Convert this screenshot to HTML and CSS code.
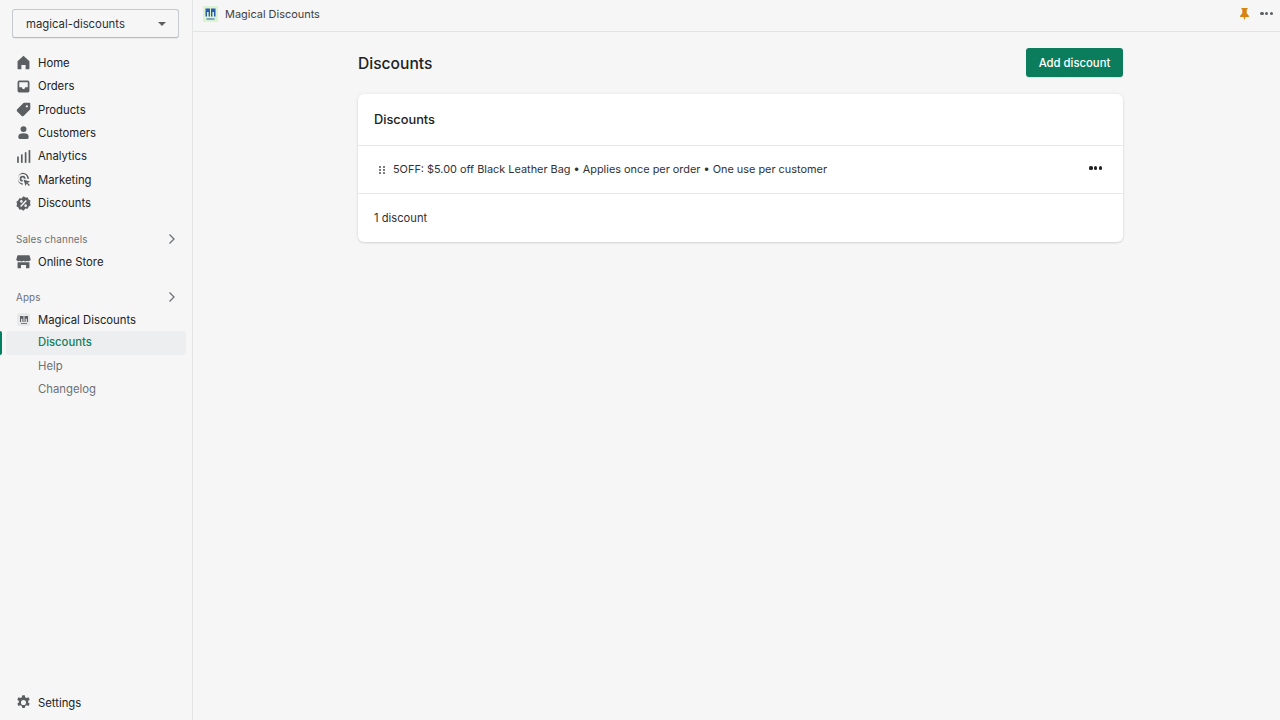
FILE: index.html
```html
<!DOCTYPE html>
<html lang="en">
<head>
<meta charset="utf-8">
<title>Magical Discounts</title>
<link rel="stylesheet" href="styles.css">
</head>
<body>
<div class="app">
  <aside class="sidebar">
    <div class="store-select"><span>magical-discounts</span><i class="caret"></i></div>
    <nav class="nav nav-main">
      <a class="item"><svg class="ic" viewBox="0 0 20 20"><path d="M10 2 3 8.500V17a1 1 0 0 0 1 1h3.500v-5h5v5H16a1 1 0 0 0 1-1V8.500z"/></svg>Home</a>
      <a class="item"><svg class="ic" viewBox="0 0 20 20"><path fill-rule="evenodd" d="M5 3h10a2 2 0 0 1 2 2v10a2 2 0 0 1-2 2H5a2 2 0 0 1-2-2V5a2 2 0 0 1 2-2zm0 2v6h3l1 2h2l1-2h3V5z"/></svg>Orders</a>
      <a class="item"><svg class="ic" viewBox="0 0 20 20"><path fill-rule="evenodd" d="M11 2h6a1 1 0 0 1 1 1v6a2 2 0 0 1-.6 1.400l-7 7a2 2 0 0 1-2.800 0l-5-5a2 2 0 0 1 0-2.800l7-7A2 2 0 0 1 11 2zm3 3a1.300 1.300 0 1 0 0 2.600a1.300 1.300 0 0 0 0-2.600z"/></svg>Products</a>
      <a class="item"><svg class="ic" viewBox="0 0 20 20"><circle cx="10" cy="6" r="3.500"/><path d="M4 14.500c0-2 2-3.500 6-3.500s6 1.500 6 3.500V16a1.500 1.500 0 0 1-1.500 1.500h-9A1.500 1.500 0 0 1 4 16z"/></svg>Customers</a>
      <a class="item"><svg class="ic" viewBox="0 0 20 20"><rect x="2.500" y="10" width="2" height="7.500"/><rect x="7" y="7.500" width="2" height="10"/><rect x="11.500" y="5" width="2" height="12.500"/><rect x="16" y="2.500" width="2" height="15"/></svg>Analytics</a>
      <a class="item"><svg class="ic" viewBox="0 0 20 20"><path d="M9 2a7.500 7.500 0 0 1 7.500 7h-2A5.500 5.500 0 1 0 9 14.500v2A7.500 7.500 0 0 1 9 2z"/><path d="M9 5.500A3.500 3.500 0 0 1 12.500 9h-2A1.500 1.500 0 1 0 9 10.500v2a3.500 3.500 0 0 1 0-7z"/><path d="M10 10l8 2.500-3.300 1.200 2.800 2.800-1.100 1.100-2.800-2.800L12.500 18z"/></svg>Marketing</a>
      <a class="item"><svg class="ic" viewBox="0 0 20 20"><path fill-rule="evenodd" d="M10 1.500l2.300 1.500 2.700-.2 1 2.500 2.300 1.500-.7 2.700.7 2.700-2.300 1.500-1 2.500-2.700-.2L10 18.500l-2.300-1.500-2.700.2-1-2.500-2.300-1.500.7-2.700L1.700 7.800 4 6.300l1-2.500 2.700.2zM7.500 6a1.500 1.500 0 1 0 0 3 1.500 1.500 0 0 0 0-3zm5 5a1.500 1.500 0 1 0 0 3 1.500 1.500 0 0 0 0-3zM12.700 6 6 13l1.300 1L14 7z"/></svg>Discounts</a>
    </nav>
    <div class="section-head sales"><span>Sales channels</span><svg class="chev" viewBox="0 0 10 12"><path d="M2.500 1.500 7 6l-4.500 4.500"/></svg></div>
    <nav class="nav">
      <a class="item"><svg class="ic" viewBox="0 0 20 20"><path d="M3 2.500h14l1.500 5a2.500 2.500 0 0 1-4.200 1.500 3.300 3.300 0 0 1-4.300 0 3.300 3.300 0 0 1-4.300 0A2.500 2.500 0 0 1 1.500 7.500z"/><path d="M3 11h14v6a1 1 0 0 1-1 1h-3v-4H7v4H4a1 1 0 0 1-1-1z"/></svg>Online Store</a>
    </nav>
    <div class="section-head apps"><span>Apps</span><svg class="chev" viewBox="0 0 10 12"><path d="M2.500 1.500 7 6l-4.500 4.500"/></svg></div>
    <nav class="nav">
      <a class="item"><span class="app-badge"><svg viewBox="0 0 10 10"><path d="M1 1h3.500v6H3.400V3.800H2.100V7H1zm4.500 0H9v6H7.900V3.800H6.600V7H5.500z"/><rect x="2" y="8" width="6" height=".8"/></svg></span>Magical Discounts</a>
      <a class="sub active">Discounts</a>
      <a class="sub">Help</a>
      <a class="sub">Changelog</a>
    </nav>
    <a class="item settings"><svg class="ic" viewBox="0 0 20 20"><path fill-rule="evenodd" d="M8.500 1.500h3l.5 2.400 1.500.8 2.300-.8 1.500 2.600-1.800 1.600v1.800l1.800 1.600-1.500 2.600-2.300-.8-1.500.8-.5 2.400h-3l-.5-2.400-1.500-.8-2.300.8-1.500-2.600 1.800-1.600V8.100L2.700 6.500l1.500-2.600 2.300.8L8 3.900zM10 7a3 3 0 1 0 0 6 3 3 0 0 0 0-6z"/></svg>Settings</a>
  </aside>
  <div class="content">
    <header class="topbar">
      <div class="top-title"><span class="logo"><svg viewBox="0 0 15 16"><path d="M2.500 2.500h4.500v8H5.600V6H4v4.500H2.500zm5.500 0h4.500v8H11V6H9.400v4.500H8z"/><rect x="3.500" y="12.500" width="8" height="1"/></svg></span>Magical Discounts</div>
      <div class="top-actions">
        <svg class="pin" viewBox="0 0 12 16"><path d="M2.500 1h7v1.500L8.500 3v4l2.500 3v1.500H7l-1 4-1-4H1V10l2.500-3V3l-1-.5z"/></svg>
        <span class="dots small"><i></i><i></i><i></i></span>
      </div>
    </header>
    <main class="page">
      <div class="page-head">
        <h1>Discounts</h1>
        <button class="primary">Add discount</button>
      </div>
      <section class="card">
        <h2 class="card-title">Discounts</h2>
        <div class="row">
          <svg class="grip" viewBox="0 0 6 8"><circle cx="1" cy="1" r=".9"/><circle cx="5" cy="1" r=".9"/><circle cx="1" cy="4" r=".9"/><circle cx="5" cy="4" r=".9"/><circle cx="1" cy="7" r=".9"/><circle cx="5" cy="7" r=".9"/></svg>
          <span class="row-text">5OFF: $5.00 off Black Leather Bag • Applies once per order • One use per customer</span>
          <span class="dots"><i></i><i></i><i></i></span>
        </div>
        <div class="card-foot">1 discount</div>
      </section>
    </main>
  </div>
</div>
</body>
</html>
```
FILE: styles.css
```css
* { box-sizing: border-box; }
html, body { margin: 0; height: 100%; }
body {
  font-family: Inter, "Liberation Sans", sans-serif;
  font-size: 11.300px;
  color: #202223;
  background: #f6f6f7;
  overflow: hidden;
}
.app { display: flex; height: 720px; }
.sidebar {
  width: 193px;
  flex: none;
  display: flex;
  flex-direction: column;
  border-right: 1px solid #e3e4e6;
  padding-top: 9px;
}
.store-select {
  margin: 0 13px 0 12px;
  height: 29px;
  display: flex;
  align-items: center;
  justify-content: space-between;
  padding: 0 12px 0 13px;
  border: 1px solid #c4cacf;
  border-bottom-color: #b5bbc0;
  border-radius: 3px;
  background: #f6f6f7;
  box-shadow: 0 1px 0 rgba(0,0,0,.05);
  color: #2c2e2f;
  font-size: 11.350px;
}
.caret {
  width: 0; height: 0;
  border-left: 4px solid transparent;
  border-right: 4px solid transparent;
  border-top: 4px solid #5c5f62;
}
.nav { display: flex; flex-direction: column; }
.nav-main { margin-top: 13px; }
.item {
  display: flex;
  align-items: center;
  height: 23.430px;
  padding-left: 15px;
  gap: 6px;
  color: #202223;
}
.ic { width: 17px; height: 17px; fill: #5c5f62; flex: none; }
.section-head {
  display: flex;
  align-items: center;
  justify-content: space-between;
  padding: 0 15px 0 16px;
  height: 16px;
  font-size: 9.900px;
  letter-spacing: .1px;
  color: #6d7175;
}
.sales { margin-top: 16px; margin-bottom: 3px; }
.apps { margin-top: 15.500px; margin-bottom: 3px; }
.chev { width: 10px; height: 12px; fill: none; stroke: #6d7175; stroke-width: 1.300; }
.app-badge {
  width: 13px; height: 13px; flex: none;
  margin: 0 2px;
  display: flex; align-items: center; justify-content: center;
  background: #e8e9ea;
  border-radius: 2px;
}
.app-badge svg { width: 10px; height: 10px; fill: #5c5f62; }
.sub {
  display: block;
  height: 23.430px;
  line-height: 23px;
  padding-left: 38px;
  color: #6d7175;
}
.active {
  position: relative;
  color: #0f8060;
  font-weight: 500;
  background: #edeef0;
  margin: 0 6px;
  padding-left: 32px;
  border-radius: 3px;
}
.active::before {
  content: "";
  position: absolute;
  left: -6px; top: 0; bottom: 0;
  width: 2px;
  background: #008060;
  border-radius: 0 2px 2px 0;
}
.settings { margin-top: auto; margin-bottom: 5.500px; }
.content { flex: 1; min-width: 0; display: flex; flex-direction: column; }
.topbar {
  height: 32px;
  flex: none;
  display: flex;
  align-items: center;
  justify-content: space-between;
  padding: 0 7px 4px 10px;
  border-bottom: 1px solid #e3e4e6;
  font-size: 10.950px;
  color: #3d4043;
}
.top-title { display: flex; align-items: center; gap: 7px; }
.logo {
  width: 15px; height: 16px;
  display: flex;
  background: #dcf3d2;
}
.logo svg { width: 15px; height: 16px; fill: #2a5bb0; }
.top-actions { display: flex; align-items: center; gap: 10px; }
.pin { width: 11px; height: 14px; fill: #d9820f; }
.dots { display: inline-flex; gap: 1.500px; }
.dots i { width: 3.200px; height: 3.200px; border-radius: 50%; background: #202223; }
.dots.small i { background: #5c5f62; }
.page { width: 765px; margin-left: 165px; padding-top: 16px; }
.page-head {
  display: flex;
  align-items: center;
  justify-content: space-between;
  height: 29px;
}
h1 { margin: 0; padding-top: 1px; font-size: 15.600px; font-weight: 500; color: #202223; }
.primary {
  width: 97px;
  height: 29px;
  padding: 0;
  border: 0;
  border-radius: 3px;
  background: #0b7d5d;
  box-shadow: 0 1px 0 rgba(0,0,0,.08);
  color: #fff;
  font: 500 11.300px Inter, "Liberation Sans", sans-serif;
}
.card {
  margin-top: 17px;
  background: #fff;
  border-radius: 6px;
  box-shadow: 0 0 4px rgba(23,24,24,.06), 0 1px 2px rgba(23,24,24,.12);
}
.card-title {
  margin: 0;
  height: 52px;
  padding: 0 16px;
  display: flex;
  align-items: center;
  font-size: 12.800px;
  font-weight: 500;
  border-bottom: 1px solid #e7e8e9;
}
.row {
  height: 48px;
  display: flex;
  align-items: center;
  padding: 0 21px;
  border-bottom: 1px solid #e7e8e9;
}
.grip { width: 6px; height: 8px; fill: #3d4043; flex: none; margin-right: 8px; }
.row-text { flex: 1; padding-bottom: 2px; font-size: 10.900px; color: #303234; }
.row .dots { margin-top: -3px; }
.card-foot {
  height: 48px;
  display: flex;
  align-items: center;
  padding: 0 16px;
  font-size: 11.200px;
  color: #303234;
}
```
